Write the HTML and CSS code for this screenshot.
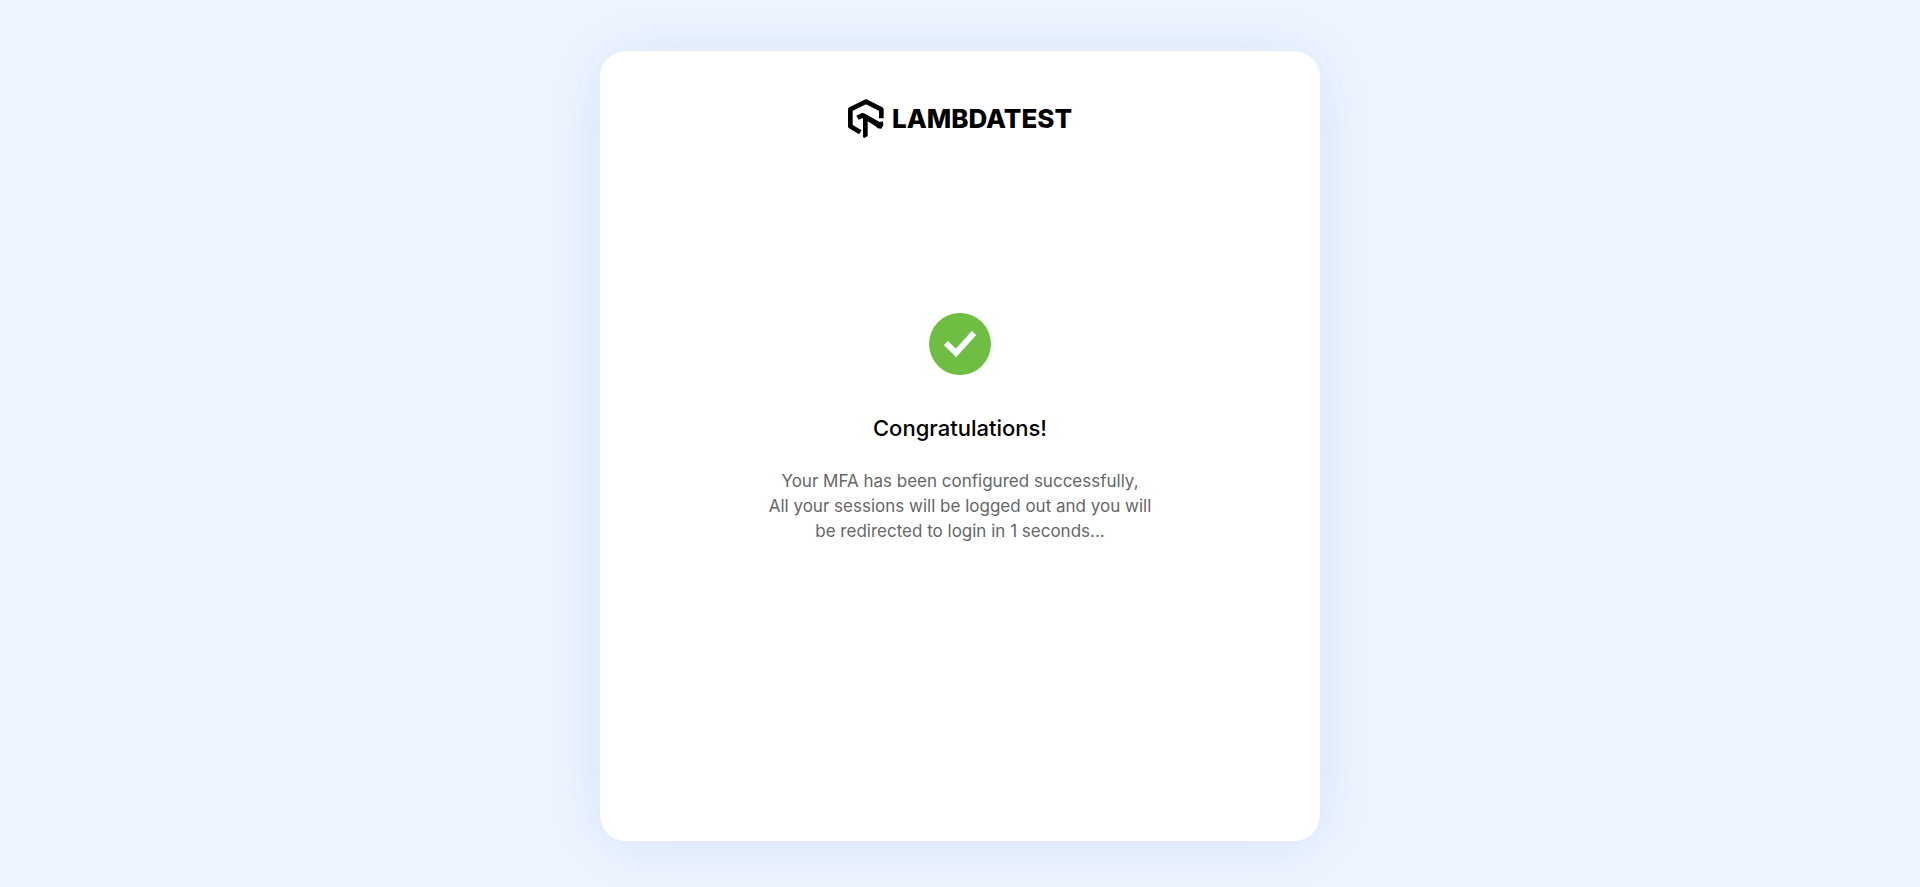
FILE: index.html
```html
<!DOCTYPE html>
<html lang="en">
<head>
<meta charset="utf-8">
<meta name="viewport" content="width=device-width, initial-scale=1">
<title>LambdaTest</title>
<link rel="stylesheet" href="styles.css">
</head>
<body>
<main class="card">
  <div class="brand">
    <svg class="brand-mark" viewBox="23 26 108 117" aria-hidden="true">
      <path class="mark-line" d="M60 126 L30 108 V57 L77 34 L123 57 V84"/>
      <path class="mark-solid" d="M48 76 L65 68 Q70 67 75 71 L118 95 L128 93 L129 105 L123 115 L112 114 L105 107 L82 93 V137 L72 143 L68 140 V83 L55 88Z"/>
    </svg>
    <span class="brand-name">LAMBDATEST</span>
  </div>
  <section class="message">
    <svg class="tick" viewBox="0 0 62 62" aria-hidden="true">
      <circle cx="31" cy="31" r="31" fill="#70bd44"/>
      <path d="M17 30 L27 40 L45 20" fill="none" stroke="#fff" stroke-width="6"/>
    </svg>
    <h1 class="title">Congratulations!</h1>
    <p class="text">Your MFA has been configured successfully,<br>All your sessions will be logged out and you will<br>be redirected to login in 1 seconds...</p>
  </section>
</main>
</body>
</html>
```
FILE: styles.css
```css
* {
  box-sizing: border-box;
}

body {
  margin: 0;
  min-height: 100vh;
  padding: 51px 24px 46px;
  display: flex;
  justify-content: center;
  background: #edf5ff;
  font-family: Inter, "Liberation Sans", sans-serif;
}

.card {
  width: 100%;
  max-width: 720px;
  padding: 48px 24px;
  border-radius: 26px;
  background: #fff;
  box-shadow: 0 4px 64px rgba(70, 110, 170, 0.13);
}

.brand {
  display: flex;
  align-items: center;
  justify-content: center;
  gap: 8px;
}

.brand-mark {
  width: 36px;
  height: 39px;
}

.mark-line {
  fill: none;
  stroke: #000;
  stroke-width: 14;
  stroke-linejoin: round;
}

.mark-solid {
  fill: #000;
}

.brand-name {
  font-size: 26px;
  line-height: 38px;
  font-weight: 800;
  color: #000;
}

.message {
  display: flex;
  flex-direction: column;
  align-items: center;
  margin-top: 175px;
  text-align: center;
}

.tick {
  width: 62px;
  height: 62px;
}

.title {
  margin: 39px 0 27px;
  font-size: 22px;
  line-height: 28px;
  font-weight: 500;
  color: #000;
}

.text {
  margin: 0;
  font-size: 17px;
  line-height: 25px;
  color: #666;
}
```
